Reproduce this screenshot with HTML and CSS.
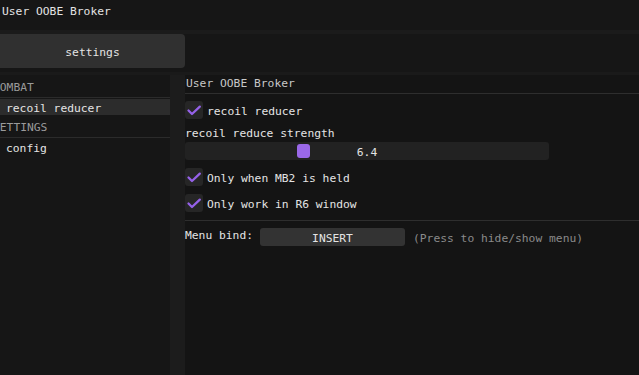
FILE: index.html
```html
<!DOCTYPE html>
<html lang="en">
<head>
    <meta charset="UTF-8">
    <title>User OOBE Broker</title>
    <link rel="stylesheet" href="styles.css">
</head>
<body>
    <div class="titlebar">User OOBE Broker</div>
    <div class="titlebar-edge"></div>

    <div class="tabs">
        <div class="tab">settings</div>
    </div>
    <div class="tabs-edge"></div>

    <div class="content">
        <div class="sidebar">
            <div class="group-header">COMBAT</div>
            <div class="nav-item selected">recoil reducer</div>
            <div class="group-header">SETTINGS</div>
            <div class="nav-item">config</div>
        </div>
        <div class="gutter"></div>
        <div class="panel">
            <div class="panel-header">User OOBE Broker</div>

            <label class="check-row first">
                <span class="checkbox">
                    <svg width="18" height="18" viewBox="0 0 18 18"><polyline points="3.5,9.5 7,13 14.8,5.6" /></svg>
                </span>
                <span class="check-text">recoil reducer</span>
            </label>

            <div class="field-label">recoil reduce strength</div>
            <div class="slider">
                <span class="grab" style="left: 112px"></span>
                <span class="slider-value">6.4</span>
            </div>

            <label class="check-row">
                <span class="checkbox">
                    <svg width="18" height="18" viewBox="0 0 18 18"><polyline points="3.5,9.5 7,13 14.8,5.6" /></svg>
                </span>
                <span class="check-text">Only when MB2 is held</span>
            </label>
            <label class="check-row">
                <span class="checkbox">
                    <svg width="18" height="18" viewBox="0 0 18 18"><polyline points="3.5,9.5 7,13 14.8,5.6" /></svg>
                </span>
                <span class="check-text">Only work in R6 window</span>
            </label>

            <div class="separator"></div>

            <div class="bind-row">
                <span class="bind-label">Menu bind:</span>
                <span class="bind-button">INSERT</span>
                <span class="hint">(Press to hide/show menu)</span>
            </div>
        </div>
    </div>
</body>
</html>
```

FILE: styles.css
```css
body {
    margin: 0;
    width: 639px;
    height: 375px;
    overflow: hidden;
    background-color: #161616;
    color: #e4e4e4;
    font-family: "DejaVu Sans Mono", "Liberation Mono", monospace;
    font-size: 11.3px;
    line-height: 14px;
    display: flex;
    flex-direction: column;
}
.titlebar {
    height: 30px;
    padding: 5px 0 0 2px;
    box-sizing: border-box;
}
.titlebar-edge {
    height: 4px;
    background-color: #1b1b1b;
}
.tabs {
    height: 38px;
}
.tab {
    width: 185px;
    height: 34px;
    line-height: 38px;
    text-align: center;
    background-color: #303030;
    border-radius: 0 4px 4px 0;
}
.tabs-edge {
    height: 3px;
    background-color: #1a1a1a;
}
.content {
    flex: 1;
    display: flex;
}
.sidebar {
    width: 170px;
    background-color: #161616;
}
.group-header {
    height: 23px;
    padding-top: 6px;
    box-sizing: border-box;
    margin-left: -7px;
    color: #9a9a9a;
    border-bottom: 1px solid #2b2b2b;
}
.nav-item {
    height: 16px;
    line-height: 19px;
    margin-top: 1px;
    padding-left: 6px;
}
.nav-item.selected {
    background-color: #2c2c2c;
}
.gutter {
    width: 15px;
    background-color: #1c1c1c;
}
.panel {
    flex: 1;
    background-color: #141414;
}
.panel-header {
    height: 19px;
    padding: 2px 0 0 1px;
    box-sizing: border-box;
    color: #c8c8c8;
    border-bottom: 1px solid #2e2e2e;
}
.check-row {
    display: flex;
    align-items: center;
    gap: 4px;
    height: 18px;
    margin-top: 8px;
}
.check-row.first {
    margin-top: 7px;
}
.check-text {
    padding-top: 3px;
}
.checkbox {
    width: 18px;
    height: 18px;
    border-radius: 3px;
    background-color: #262626;
}
.checkbox svg {
    display: block;
}
.checkbox polyline {
    fill: none;
    stroke: #9561e8;
    stroke-width: 2.3;
    stroke-linecap: round;
    stroke-linejoin: round;
}
.field-label {
    margin-top: 6px;
    height: 16px;
    line-height: 17px;
}
.slider {
    position: relative;
    width: 364px;
    height: 18px;
    line-height: 21px;
    margin-top: 1px;
    border-radius: 3px;
    background-color: #222222;
    text-align: center;
}
.grab {
    position: absolute;
    top: 2px;
    width: 13px;
    height: 14px;
    border-radius: 3px;
    background-color: #9a68e8;
}
.separator {
    height: 1px;
    margin-top: 8px;
    background-color: #2e2e2e;
}
.bind-row {
    display: flex;
    align-items: flex-start;
    margin-top: 7px;
}
.bind-label {
    width: 75px;
    line-height: 15px;
}
.bind-button {
    width: 145px;
    height: 18px;
    line-height: 21px;
    text-align: center;
    border-radius: 3px;
    background-color: #333333;
}
.hint {
    margin-left: 8px;
    line-height: 21px;
    color: #8a8a8a;
}
```
